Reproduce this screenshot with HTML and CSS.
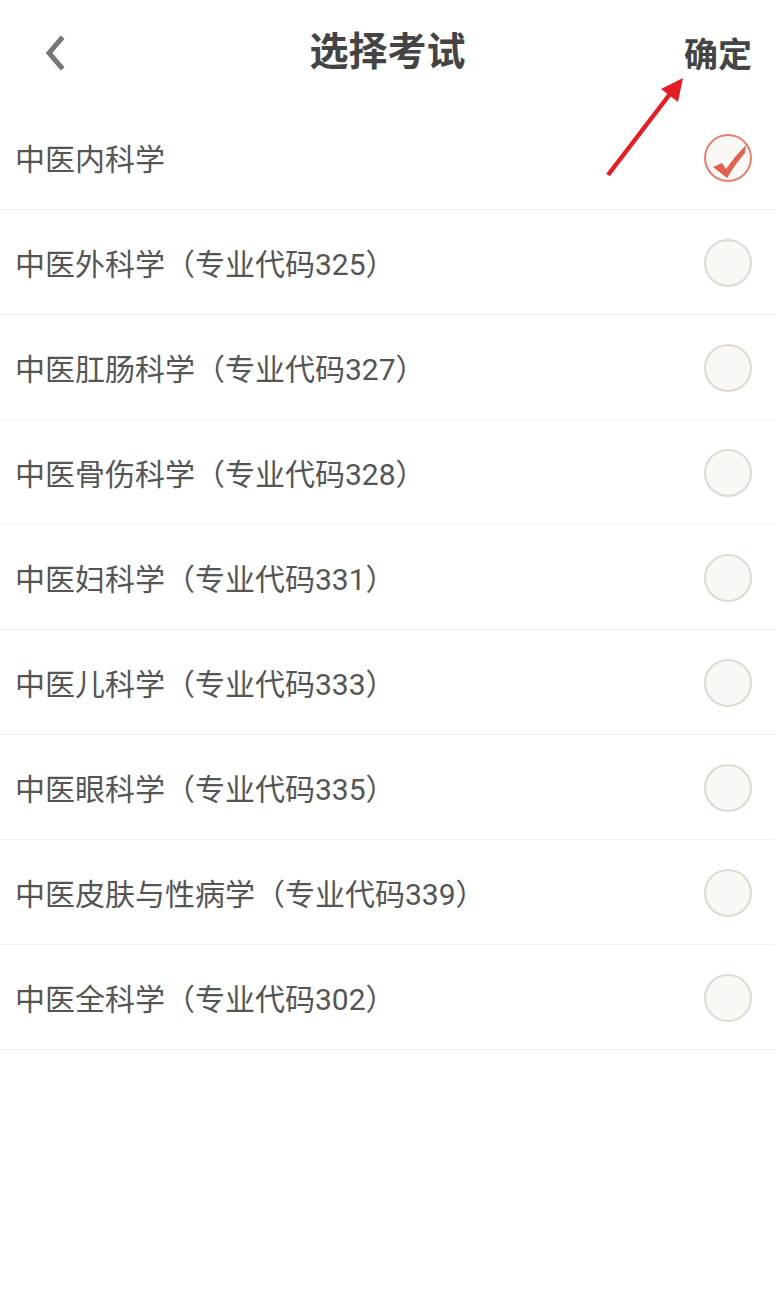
FILE: index.html
```html
<!DOCTYPE html>
<html lang="zh-CN">
<head>
<meta charset="utf-8">
<title>选择考试</title>
<link rel="stylesheet" href="styles.css">
</head>
<body>
<div class="page">
  <header class="topbar">
    <span class="back">
      <svg width="24" height="36" viewBox="0 0 24 36"><polyline points="17,4 5,18 17,32" fill="none" stroke="#777" stroke-width="5" stroke-linecap="square"/></svg>
    </span>
    <h1 class="title">选择考试</h1>
    <span class="confirm">确定</span>
  </header>
  <ul class="list">
    <li class="row"><span class="label">中医内科学</span><span class="radio checked"><svg width="48" height="48" viewBox="0 0 48 48"><path d="M9 33 L18 29 L22 35 Q31 22 42 11 L41 19 Q32 29 23 44 Z" fill="#e0614f"/></svg></span></li>
    <li class="row"><span class="label">中医外科学（专业代码325）</span><span class="radio"></span></li>
    <li class="row"><span class="label">中医肛肠科学（专业代码327）</span><span class="radio"></span></li>
    <li class="row"><span class="label">中医骨伤科学（专业代码328）</span><span class="radio"></span></li>
    <li class="row"><span class="label">中医妇科学（专业代码331）</span><span class="radio"></span></li>
    <li class="row"><span class="label">中医儿科学（专业代码333）</span><span class="radio"></span></li>
    <li class="row"><span class="label">中医眼科学（专业代码335）</span><span class="radio"></span></li>
    <li class="row"><span class="label">中医皮肤与性病学（专业代码339）</span><span class="radio"></span></li>
    <li class="row"><span class="label">中医全科学（专业代码302）</span><span class="radio"></span></li>
  </ul>
  <svg class="arrow" width="100" height="120" viewBox="600 70 100 120">
    <line x1="608" y1="175" x2="670" y2="94" stroke="#e31e24" stroke-width="4.5"/>
    <polygon points="683,78 661,89 678,102" fill="#e31e24"/>
  </svg>
</div>
</body>
</html>
```
FILE: styles.css
```css
* { box-sizing: border-box; }
html, body { margin: 0; padding: 0; background: #fff; }
body {
  font-family: Roboto, "Noto Sans CJK SC", "Noto Sans", sans-serif;
  color: #555;
}
.page { position: relative; width: 775px; }
.topbar {
  height: 105px;
  display: flex;
  align-items: center;
  justify-content: space-between;
  padding: 0 23px 0 44px;
  position: relative;
}
.back { display: flex; width: 24px; height: 36px; margin-top: 0; }
.title {
  position: absolute;
  left: 0; right: 0;
  top: 0;
  margin: 0;
  height: 105px;
  line-height: 104px;
  text-align: center;
  font-size: 39px;
  font-weight: 700;
  color: #444;
  pointer-events: none;
}
.confirm {
  font-size: 34px;
  font-weight: 700;
  color: #444;
  margin-top: 0;
}
.list { list-style: none; margin: 0; padding: 0; }
.row {
  height: 105px;
  border-bottom: 1px solid #efefef;
  display: flex;
  align-items: center;
  justify-content: space-between;
  padding: 0 23px 0 15px;
}
.label { font-size: 30px; color: #555; }
.radio {
  width: 48px; height: 48px;
  border-radius: 50%;
  border: 2px solid #e0d9cf;
  background: #faf8f5;
  display: flex;
  align-items: center;
  justify-content: center;
  position: relative;
  margin-top: 2px;
}
.radio.checked { border-color: #e57f72; }
.radio.checked svg { position: absolute; left: -2px; top: -2px; }
.arrow { position: absolute; left: 600px; top: 70px; }
```
